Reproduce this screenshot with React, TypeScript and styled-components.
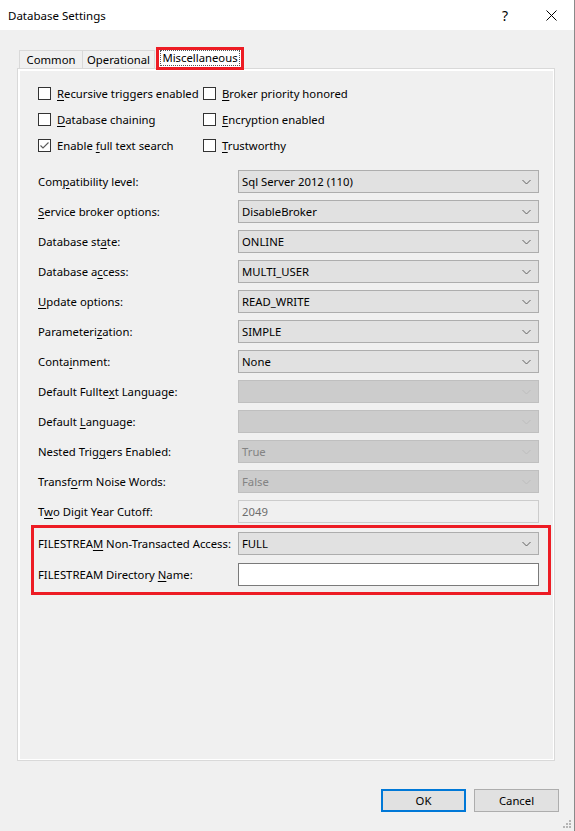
import React, {FC, ReactNode} from 'react';
import styled, {createGlobalStyle} from 'styled-components';


const GlobalStyle = createGlobalStyle`
    body {
        margin: 0;
        font-family: "Noto Sans", "Open Sans", sans-serif;
        font-size: 11.3px;
        color: #000;
    }
`

const Window = styled.div`
    position: relative;
    width: 575px;
    height: 831px;
    box-sizing: border-box;
    display: flex;
    flex-direction: column;
    background: #f0f0f0;
    border-right: 1px solid #8a8a8a;
`

const TitleBar = styled.div`
    height: 30px;
    display: flex;
    align-items: center;
    background: #fff;
`

const TitleText = styled.div`
    flex: 1;
    padding-left: 8px;
    font-size: 11.5px;
`

const CaptionButton = styled.div`
    width: 46px;
    height: 30px;
    display: flex;
    align-items: center;
    justify-content: center;
    font-size: 14px;
`

const Body = styled.div`
    flex: 1;
    display: flex;
    flex-direction: column;
    padding: 17px 19px 19px 17px;
`

const TabStrip = styled.div`
    height: 21px;
    display: flex;
    align-items: flex-end;
    padding-left: 2px;
    position: relative;
    z-index: 1;
`

const Tab = styled.div<{ $w: number; $active?: boolean }>`
    width: ${p => p.$w}px;
    box-sizing: border-box;
    height: ${p => p.$active ? 23 : 18}px;
    display: flex;
    align-items: center;
    justify-content: center;
    background: ${p => p.$active ? '#fff' : '#f0f0f0'};
    border: ${p => p.$active ? '3px solid #ed1c24' : '1px solid #d9d9d9'};
    border-bottom: ${p => p.$active ? '3px solid #ed1c24' : 'none'};
    margin-left: ${p => p.$active ? 1 : -1}px;
    margin-bottom: ${p => p.$active ? -2 : 0}px;
    padding-bottom: ${p => p.$active ? 2 : 0}px;
    &:first-child {
        margin-left: 0;
    }
`

const FocusRect = styled.span`
    outline: 1px dotted #555;
    padding: 0 1px;
    line-height: 14px;
`

const Panel = styled.div`
    flex: 1;
    display: flex;
    border: 1px solid #d9d9d9;
    background: #fff;
    padding: 2px 1px 1px 2px;
`

const PanelInner = styled.div`
    flex: 1;
    background: #f0f0f0;
`

const CheckGrid = styled.div`
    display: grid;
    grid-template-columns: 165px auto;
    grid-auto-rows: 26px;
    align-items: center;
    padding: 9px 0 0 18px;
`

const CheckItem = styled.label`
    display: flex;
    align-items: center;
    gap: 6px;
`

const Box = styled.span`
    width: 13px;
    height: 13px;
    box-sizing: border-box;
    border: 1px solid #333;
    background: #fff;
    display: flex;
    align-items: center;
    justify-content: center;
`

const Key = styled.u`
    text-decoration: underline;
    text-underline-offset: 2px;
    text-decoration-thickness: 1px;
`

const Form = styled.div`
    display: grid;
    grid-template-columns: 200px 301px;
    row-gap: 7px;
    align-items: center;
    padding: 12px 0 0 18px;
`

const Highlight = styled.div`
    display: grid;
    grid-template-columns: 200px 301px;
    row-gap: 8px;
    align-items: center;
    width: 520px;
    box-sizing: border-box;
    margin: 2px 0 0 11px;
    padding: 4px 9px 6px 4px;
    border: 3px solid #ed1c24;
`

const Label = styled.div`
    white-space: nowrap;
`

const Combo = styled.div<{ $disabled?: boolean }>`
    height: 23px;
    box-sizing: border-box;
    display: flex;
    align-items: center;
    justify-content: space-between;
    padding: 0 7px 0 3px;
    background: ${p => p.$disabled ? '#cccccc' : '#e1e1e1'};
    border: 1px solid ${p => p.$disabled ? '#bfbfbf' : '#adadad'};
    color: ${p => p.$disabled ? '#838383' : '#000'};
`

const TextBox = styled.div<{ $disabled?: boolean }>`
    height: 23px;
    box-sizing: border-box;
    display: flex;
    align-items: center;
    padding: 0 3px;
    background: ${p => p.$disabled ? '#f0f0f0' : '#fff'};
    border: 1px solid ${p => p.$disabled ? '#cccccc' : '#7a7a7a'};
    color: #6d6d6d;
`

const Footer = styled.div`
    height: 23px;
    margin: 28px -4px 0 0;
    display: flex;
    justify-content: flex-end;
    gap: 8px;
`

const Button = styled.button<{ $primary?: boolean }>`
    width: 85px;
    height: 23px;
    box-sizing: border-box;
    padding: 0;
    font: inherit;
    color: #000;
    background: #e1e1e1;
    border: ${p => p.$primary ? '2px solid #0078d7' : '1px solid #adadad'};
`

const Grip = styled.svg`
    position: absolute;
    right: 2px;
    bottom: 2px;
`


const Chevron: FC<{ disabled?: boolean }> = ({disabled}) => (
    <svg width="9" height="6" viewBox="0 0 9 6">
        <path d="M0.5 1 L4.5 5 L8.5 1" fill="none" stroke={disabled ? '#bdbdbd' : '#606060'} strokeWidth="1"/>
    </svg>
)

const Check: FC<{ label: ReactNode; checked?: boolean }> = ({label, checked}) => (
    <CheckItem>
        <Box>
            {checked && (
                <svg width="11" height="11" viewBox="0 0 11 11">
                    <path d="M1.5 5.5 L4 8 L9.5 2.5" fill="none" stroke="#5a5a5a" strokeWidth="1.1"/>
                </svg>
            )}
        </Box>
        <span>{label}</span>
    </CheckItem>
)

const DropRow: FC<{ label: ReactNode; value?: string; disabled?: boolean }> = ({label, value, disabled}) => (
    <>
        <Label>{label}</Label>
        <Combo $disabled={disabled}>
            <span>{value}</span>
            <Chevron disabled={disabled}/>
        </Combo>
    </>
)


const App: FC = () => {
    return (
        <Window>
            <GlobalStyle/>
            <TitleBar>
                <TitleText>Database Settings</TitleText>
                <CaptionButton>?</CaptionButton>
                <CaptionButton>
                    <svg width="11" height="11" viewBox="0 0 11 11">
                        <path d="M0.5 0.5 L10.5 10.5 M10.5 0.5 L0.5 10.5" stroke="#000" strokeWidth="1"/>
                    </svg>
                </CaptionButton>
            </TitleBar>
            <Body>
                <TabStrip>
                    <Tab $w={64}>Common</Tab>
                    <Tab $w={73}>Operational</Tab>
                    <Tab $w={88} $active><FocusRect>Miscellaneous</FocusRect></Tab>
                </TabStrip>
                <Panel>
                    <PanelInner>
                        <CheckGrid>
                            <Check label={<><Key>R</Key>ecursive triggers enabled</>}/>
                            <Check label={<><Key>B</Key>roker priority honored</>}/>
                            <Check label={<><Key>D</Key>atabase chaining</>}/>
                            <Check label={<><Key>E</Key>ncryption enabled</>}/>
                            <Check checked label={<>Enable <Key>f</Key>ull text search</>}/>
                            <Check label={<><Key>T</Key>rustworthy</>}/>
                        </CheckGrid>
                        <Form>
                            <DropRow label={<>Com<Key>p</Key>atibility level:</>} value="Sql Server 2012 (110)"/>
                            <DropRow label={<><Key>S</Key>ervice broker options:</>} value="DisableBroker"/>
                            <DropRow label={<>Database st<Key>a</Key>te:</>} value="ONLINE"/>
                            <DropRow label={<>Database a<Key>c</Key>cess:</>} value="MULTI_USER"/>
                            <DropRow label={<><Key>U</Key>pdate options:</>} value="READ_WRITE"/>
                            <DropRow label={<>Parameteri<Key>z</Key>ation:</>} value="SIMPLE"/>
                            <DropRow label={<>Conta<Key>i</Key>nment:</>} value="None"/>
                            <DropRow label={<>Default Fullte<Key>x</Key>t Language:</>} disabled/>
                            <DropRow label={<>Default <Key>L</Key>anguage:</>} disabled/>
                            <DropRow label={<>Nested Trig<Key>g</Key>ers Enabled:</>} value="True" disabled/>
                            <DropRow label={<>Transf<Key>o</Key>rm Noise Words:</>} value="False" disabled/>
                            <Label>T<Key>w</Key>o Digit Year Cutoff:</Label>
                            <TextBox $disabled>2049</TextBox>
                        </Form>
                        <Highlight>
                            <DropRow label={<>FILESTREA<Key>M</Key> Non-Transacted Access:</>} value="FULL"/>
                            <Label>FILESTREAM Directory <Key>N</Key>ame:</Label>
                            <TextBox/>
                        </Highlight>
                    </PanelInner>
                </Panel>
                <Footer>
                    <Button $primary>OK</Button>
                    <Button>Cancel</Button>
                </Footer>
            </Body>
            <Grip width="9" height="9" viewBox="0 0 9 9">
                <g fill="#b5b5b5">
                    <rect x="6" y="0" width="2" height="2"/>
                    <rect x="3" y="3" width="2" height="2"/>
                    <rect x="6" y="3" width="2" height="2"/>
                    <rect x="0" y="6" width="2" height="2"/>
                    <rect x="3" y="6" width="2" height="2"/>
                    <rect x="6" y="6" width="2" height="2"/>
                </g>
            </Grip>
        </Window>
    )
}

export default App;
